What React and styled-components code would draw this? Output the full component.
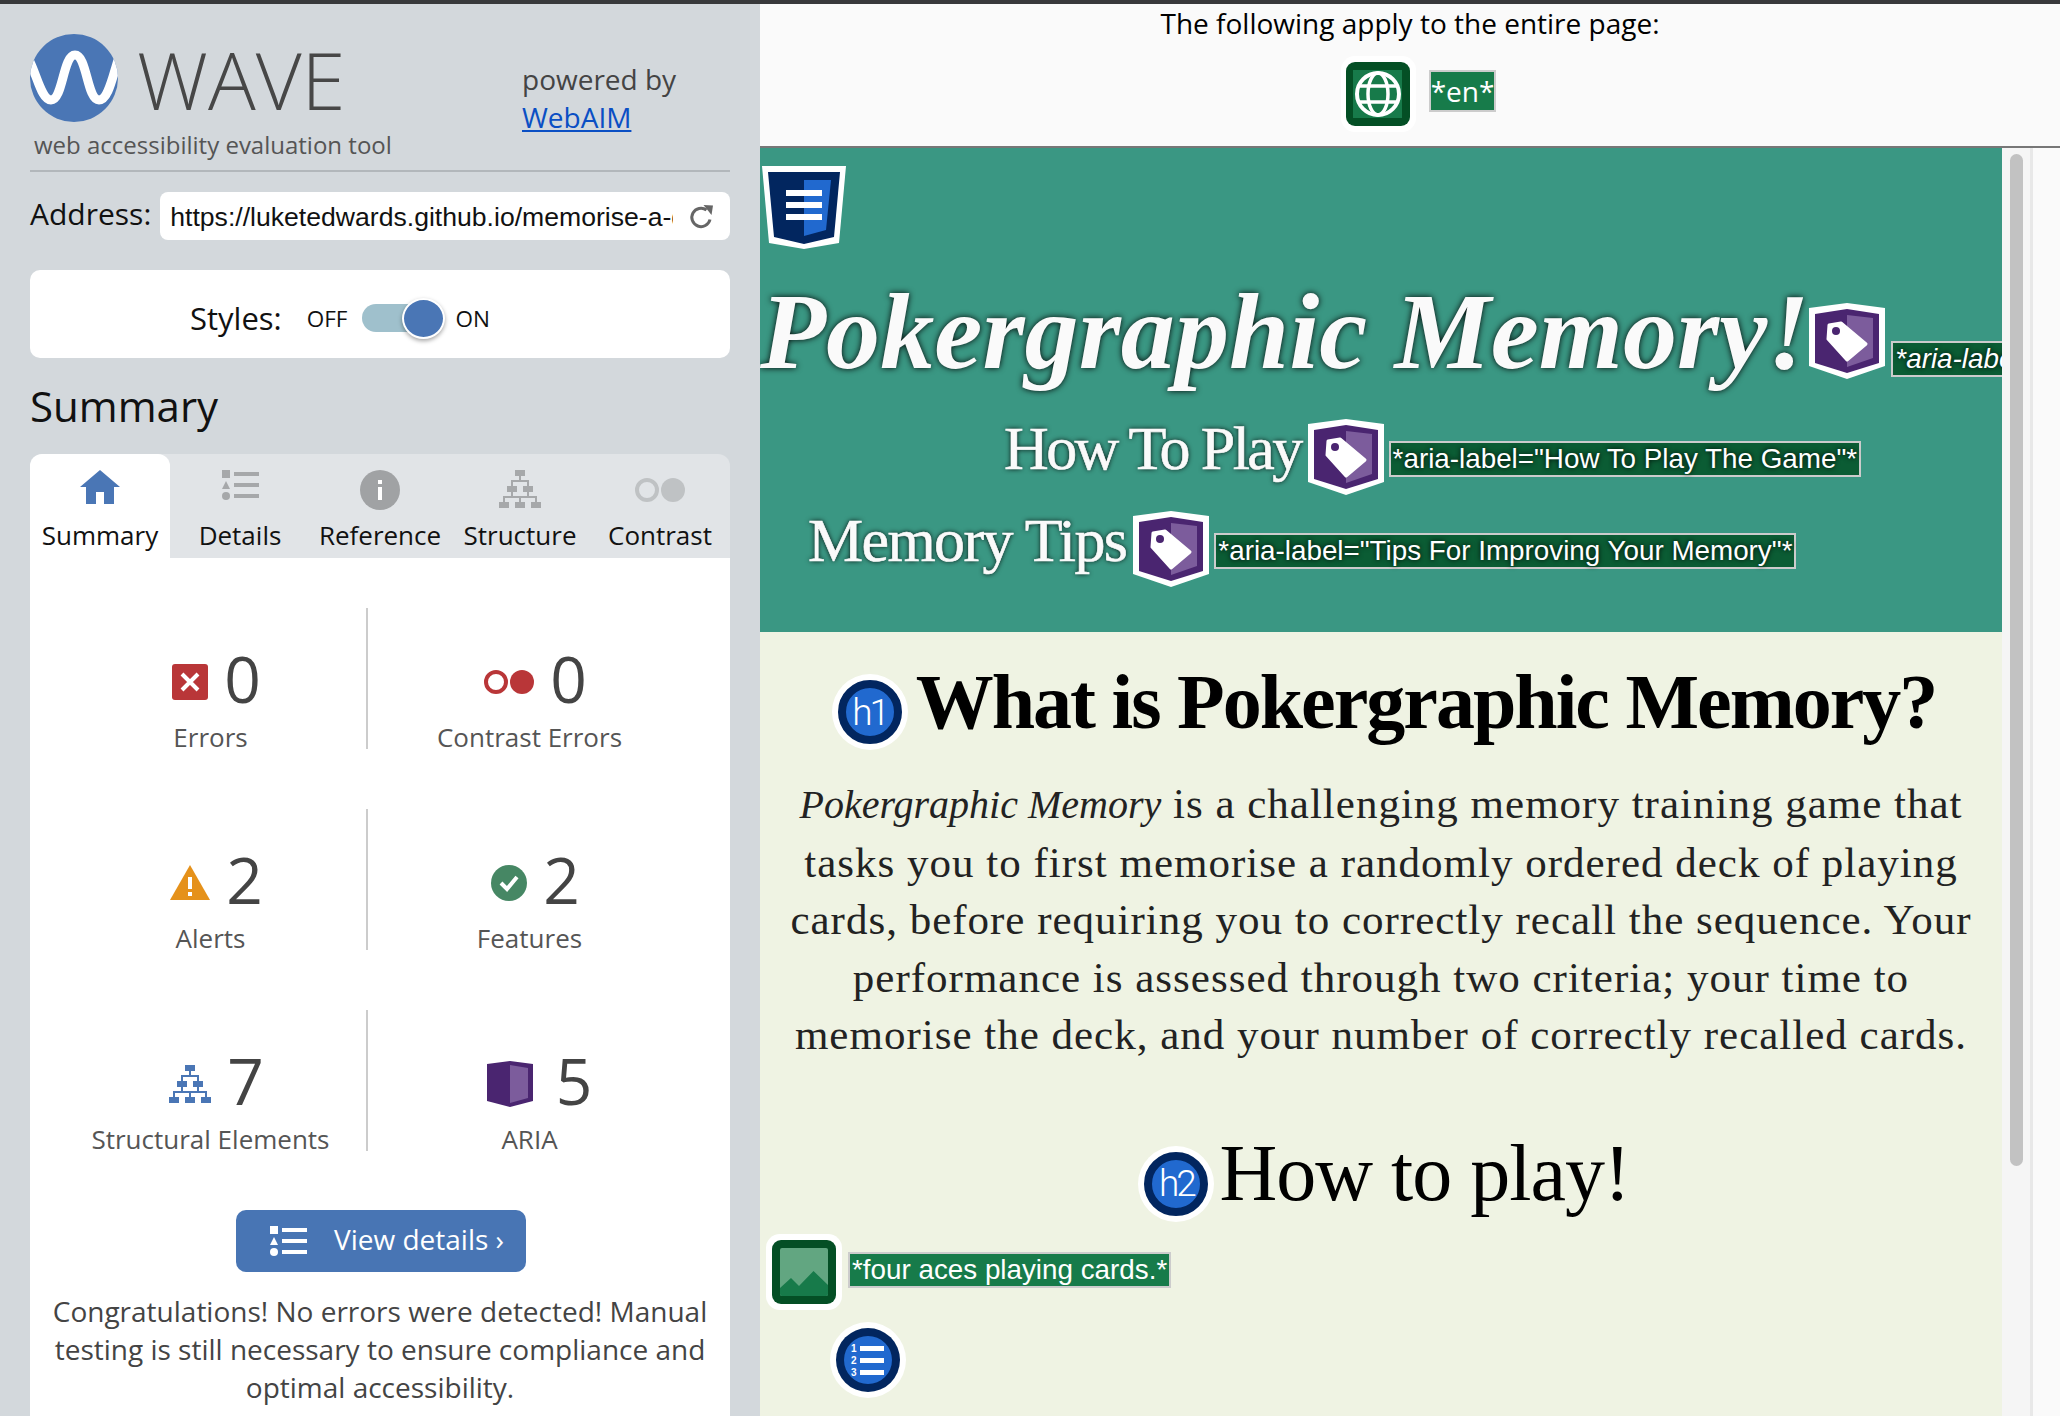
import React from "react";
import styled, { createGlobalStyle } from "styled-components";

const GlobalStyle = createGlobalStyle`
  html, body {
    margin: 0;
    padding: 0;
    height: 100%;
    overflow: hidden;
    font-family: "Open Sans", "Liberation Sans", sans-serif;
  }
  * { box-sizing: border-box; }
`;

const Page = styled.div`
  width: 2060px;
  height: 1416px;
  overflow: hidden;
  display: flex;
  border-top: 4px solid #38393b;
`;

/* ---------- sidebar ---------- */
const Sidebar = styled.aside`
  width: 760px;
  flex: none;
  padding: 30px 30px 0;
  background: #d3d8dc;
`;

const Brand = styled.header`
  display: flex;
`;

const BrandLeft = styled.div`
  width: 492px;
`;

const LogoRow = styled.div`
  display: flex;
  align-items: center;
  height: 88px;
  gap: 19px;
`;

const WaveName = styled.div`
  padding-top: 2px;
  font-size: 79.5px;
  line-height: 88px;
  font-weight: 300;
  color: #474747;
`;

const Tagline = styled.div`
  margin: 7px 0 0 4px;
  font-size: 24px;
  line-height: 32px;
  color: #555;
`;

const Powered = styled.div`
  margin-top: 26px;
  font-size: 28px;
  line-height: 38px;
  color: #444;

  a {
    color: #0a4fc4;
    text-decoration: underline;
  }
`;

const Divider = styled.hr`
  margin: 9px 0 0;
  border: none;
  height: 2px;
  background: #b2b7bb;
`;

const AddressRow = styled.div`
  display: flex;
  align-items: center;
  margin-top: 20px;
  gap: 9px;
`;

const AddressLabel = styled.label`
  font-size: 30px;
  line-height: 38px;
  padding-bottom: 4px;
  color: #111;
`;

const AddressBox = styled.div`
  flex: 1;
  height: 48px;
  display: flex;
  align-items: center;
  gap: 16px;
  padding: 2px 14px 0 10px;
  background: #fff;
  border-radius: 8px;
`;

const AddressInput = styled.input`
  flex: none;
  width: 503px;
  padding: 0;
  border: none;
  outline: none;
  background: none;
  font-family: "Liberation Sans", Arial, sans-serif;
  font-size: 26.6px;
  color: #111;
`;

const StylesCard = styled.div`
  display: flex;
  align-items: center;
  height: 88px;
  margin-top: 30px;
  padding: 8px 0 0 160px;
  background: #fff;
  border-radius: 10px;
`;

const StylesLabel = styled.span`
  font-size: 31px;
  color: #111;
  margin-right: 25px;
`;

const SwitchText = styled.span`
  font-size: 22.5px;
  color: #111;
`;

const Switch = styled.div`
  position: relative;
  width: 70px;
  height: 28px;
  margin: 0 23px 0 15px;
  border-radius: 14px;
  background: #9fc0cc;
`;

const Knob = styled.div`
  position: absolute;
  left: 40px;
  top: -6px;
  width: 43px;
  height: 41px;
  border-radius: 50%;
  border: 2px solid #fff;
  background: #4a76b5;
  box-shadow: 0 2px 4px rgba(0, 0, 0, 0.35);
`;

const SummaryTitle = styled.h2`
  margin: 20px 0 20px;
  font-size: 42px;
  line-height: 56px;
  font-weight: 400;
  color: #111;
`;

const Tabs = styled.nav`
  display: flex;
  height: 104px;
  background: #e1e4e7;
  border-radius: 12px 12px 0 0;
`;

const Tab = styled.div`
  width: 140px;
  display: flex;
  flex-direction: column;
  align-items: center;
  padding-top: 16px;
  border-radius: 12px 12px 0 0;
  background: ${(p) => (p.$active ? "#fff" : "transparent")};
`;

const TabIcon = styled.div`
  height: 40px;
  display: flex;
  align-items: ${(p) => (p.$middle ? "center" : "flex-start")};
`;

const TabLabel = styled.div`
  margin-top: 7px;
  font-size: 26px;
  line-height: 36px;
  color: #111;
`;

const Panel = styled.section`
  background: #fff;
  height: 860px;
  padding-top: 50px;
`;

const StatGrid = styled.div`
  display: grid;
  grid-template-columns: 313px 323px;
  grid-auto-rows: 141px;
  row-gap: 60px;
  padding-left: 25px;
`;

const Stat = styled.div`
  display: flex;
  flex-direction: column;
  align-items: center;
  padding-top: 31px;
  border-right: ${(p) => (p.$first ? "2px solid #ccc" : "none")};
`;

const StatTop = styled.div`
  display: flex;
  align-items: center;
  gap: 16px;
  margin-left: 12px;

  svg {
    margin-top: 5px;
  }
`;

const StatNumber = styled.span`
  font-size: 64px;
  line-height: 80px;
  font-weight: 400;
  color: #444;
`;

const StatLabel = styled.div`
  font-size: 26px;
  line-height: 36px;
  color: #555;
`;

const DetailsButton = styled.button`
  display: flex;
  align-items: center;
  gap: 27px;
  width: 290px;
  height: 62px;
  margin: 59px 0 0 206px;
  padding: 0 0 4px 34px;
  border: none;
  border-radius: 10px;
  background: #4875b4;
  color: #fff;
  font-family: inherit;
  font-size: 28px;

  svg {
    margin-top: 4px;
  }
`;

const Congrats = styled.p`
  margin: 20px 0 0;
  padding: 0 16px;
  text-align: center;
  font-size: 28px;
  line-height: 38px;
  color: #444;
`;

/* ---------- page view ---------- */
const Viewer = styled.div`
  flex: 1;
  display: flex;
  flex-direction: column;
  min-width: 0;
  background: #fafafa;
`;

const PageNotes = styled.div`
  height: 144px;
  flex: none;
  text-align: center;
  border-bottom: 2px solid #777;
`;

const NotesTitle = styled.div`
  font-size: 28px;
  line-height: 38px;
  color: #000;
`;

const NotesRow = styled.div`
  display: flex;
  justify-content: center;
  align-items: center;
  gap: 13px;
  margin-top: 14px;
  padding-left: 17px;
`;

const ViewerBody = styled.div`
  flex: 1;
  display: flex;
  min-height: 0;
`;

const Site = styled.main`
  width: 1242px;
  flex: none;
  overflow: hidden;
  background: #eff3e3;
`;

const Banner = styled.div`
  height: 484px;
  padding-top: 18px;
  background: #3a9783;
  color: #fafafa;
`;

const BannerShield = styled.svg`
  display: block;
  margin-left: 2px;
`;

const BannerRow = styled.div`
  display: flex;
  align-items: flex-start;
  white-space: nowrap;
  gap: ${(p) => p.$gap}px;
  margin-top: ${(p) => p.$top}px;
  margin-left: ${(p) => p.$indent}px;
`;

const SiteTitle = styled.h1`
  margin: 0;
  font-family: "Liberation Serif", "Times New Roman", serif;
  font-style: italic;
  font-size: 108.25px;
  line-height: 104px;
  font-weight: 700;
  text-shadow: 0 0 6px #000;
`;

const SiteLink = styled.div`
  font-family: "Liberation Serif", "Times New Roman", serif;
  font-size: 62px;
  line-height: 80px;
  letter-spacing: ${(p) => p.$tight}px;
  -webkit-text-stroke: 0.6px #fafafa;
  text-shadow: 0 0 5px #000;
`;

const Marker = styled.svg`
  flex: none;
  margin-top: ${(p) => p.$top || 0}px;
`;

const Note = styled.span`
  flex: none;
  height: ${(p) => (p.$large ? 42 : 36)}px;
  margin-top: ${(p) => p.$top || 0}px;
  margin-left: ${(p) => p.$left || 0}px;
  margin-bottom: ${(p) => (p.$large ? 6 : 0)}px;
  padding: 0 ${(p) => (p.$large ? 0 : 2)}px;
  border: 2px solid #ccc;
  background: ${(p) => (p.$dark ? "#0b5c34" : "#177b4a")};
  color: #fff;
  white-space: nowrap;
  font-family: ${(p) => (p.$large ? '"Open Sans", sans-serif' : '"Liberation Sans", Arial, sans-serif')};
  font-size: ${(p) => (p.$large ? 28 : 27.8)}px;
  line-height: ${(p) => (p.$large ? 38 : 32)}px;
  font-style: ${(p) => (p.$italic ? "italic" : "normal")};
  text-shadow: ${(p) => (p.$dark ? "0 0 5px #000" : "none")};
`;

const HeadingRow = styled.div`
  display: flex;
  justify-content: center;
  align-items: flex-start;
  gap: ${(p) => p.$gap}px;
  margin-top: ${(p) => p.$top}px;
  padding-left: 6px;
`;

const HeadingBadge = styled.div`
  flex: none;
  width: 64px;
  height: 64px;
  margin: ${(p) => p.$top + 6}px 6px 6px;
  display: flex;
  align-items: center;
  justify-content: center;
  border: 8px solid #02265f;
  border-radius: 50%;
  background: #2169cf;
  box-shadow: 0 0 0 6px #fff;
  color: #fff;
  font-family: Roboto, "Liberation Sans", sans-serif;
  font-weight: 300;
  font-size: 37px;
  letter-spacing: -3px;
`;

const MainHeading = styled.h2`
  margin: 0;
  font-family: "Liberation Serif", "Times New Roman", serif;
  font-size: 78px;
  line-height: 92px;
  letter-spacing: -2px;
  font-weight: 700;
  color: #000;
`;

const SubHeading = styled.h2`
  margin: 0;
  font-family: "Liberation Serif", "Times New Roman", serif;
  font-size: 80px;
  line-height: 78px;
  letter-spacing: -1px;
  font-weight: 400;
  color: #000;
`;

const Intro = styled.p`
  margin: 25px 0 0;
  text-align: center;
  font-family: "Liberation Serif", "Times New Roman", serif;
  font-size: 43px;
  line-height: 57.5px;
  letter-spacing: 1px;
  color: #222;
  white-space: nowrap;

  em {
    font-size: 40px;
    letter-spacing: 0;
  }
`;

const ImageRow = styled.div`
  display: flex;
  align-items: flex-start;
  gap: 6px;
  margin-top: 12px;
  padding-left: 6px;
`;

const ListMarker = styled.svg`
  display: block;
  margin: 12px 0 0 70px;
`;

const ScrollTrack = styled.div`
  width: 31px;
  flex: none;
  padding: 6px 7px 0 8px;
  background: #f5f5f5;
  border-right: 3px solid #e8e8e8;
`;

const ScrollThumb = styled.div`
  height: 1012px;
  border-radius: 8px;
  background: #c2c2c2;
`;

/* ---------- drawings ---------- */
const Logo = () => (
  <svg width="88" height="88" viewBox="0 0 88 88">
    <defs>
      <clipPath id="logo-clip">
        <circle cx="44" cy="44" r="44" />
      </clipPath>
    </defs>
    <circle cx="44" cy="44" r="44" fill="#4a76b5" />
    <path
      d="M0 28C8 45 12 66 21 66C33 66 33 21 45 21C57 21 57 66 69 66C78 66 82 45 88 26"
      fill="none"
      stroke="#fff"
      strokeWidth="9"
      clipPath="url(#logo-clip)"
    />
  </svg>
);

const Refresh = () => (
  <svg width="26" height="26" viewBox="0 0 26 26">
    <path d="M21 15.5A9.2 9.2 0 1 1 17.5 6" fill="none" stroke="#666" strokeWidth="3" />
    <path d="M14.5 1L24 1.5L22.5 11Z" fill="#666" />
  </svg>
);

const HomeIcon = () => (
  <svg width="40" height="34" viewBox="0 0 40 34">
    <path d="M20 0L40 17H34V34H24V22H16V34H6V17H0Z" fill="#4a76b5" />
  </svg>
);

const DetailsIcon = ({ color }) => (
  <svg width="37" height="30" viewBox="0 0 37 30" fill={color}>
    <rect x="0" y="0" width="8" height="8" />
    <rect x="12" y="2" width="25" height="4" />
    <path d="M4 11L8 19H0Z" />
    <rect x="12" y="13" width="25" height="4" />
    <circle cx="4" cy="26" r="4" />
    <rect x="12" y="24" width="25" height="4" />
  </svg>
);

const InfoIcon = () => (
  <svg width="40" height="40" viewBox="0 0 40 40">
    <circle cx="20" cy="20" r="20" fill="#a0a2a4" />
    <rect x="18" y="10" width="4" height="4" fill="#fff" />
    <rect x="18" y="17" width="4" height="13" fill="#fff" />
  </svg>
);

const StructureIcon = ({ color }) => (
  <svg width="42" height="38" viewBox="0 0 42 38" fill={color}>
    <path
      d="M21 6V11M13 16V11H29V16M13 22V27M29 22V27M5 32V27H37V32M21 27V32"
      fill="none"
      stroke={color}
      strokeWidth="2"
    />
    <rect x="16" y="0" width="10" height="6" />
    <rect x="8" y="16" width="10" height="6" />
    <rect x="24" y="16" width="10" height="6" />
    <rect x="0" y="32" width="10" height="6" />
    <rect x="16" y="32" width="10" height="6" />
    <rect x="32" y="32" width="10" height="6" />
  </svg>
);

const ContrastIcon = ({ color }) => (
  <svg width="50" height="24" viewBox="0 0 50 24">
    <circle cx="12" cy="12" r="10" fill="none" stroke={color} strokeWidth="4" />
    <circle cx="38" cy="12" r="12" fill={color} />
  </svg>
);

const ErrorIcon = () => (
  <svg width="36" height="36" viewBox="0 0 36 36">
    <rect width="36" height="36" rx="3" fill="#b93638" />
    <path d="M10 10L26 26M26 10L10 26" stroke="#fff" strokeWidth="4" />
  </svg>
);

const AlertIcon = () => (
  <svg width="40" height="35" viewBox="0 0 40 35">
    <path d="M20 0L40 35H0Z" fill="#e5911a" />
    <rect x="18" y="12" width="4" height="12" fill="#fff" />
    <rect x="18" y="27" width="4" height="4" fill="#fff" />
  </svg>
);

const FeatureIcon = () => (
  <svg width="36" height="36" viewBox="0 0 36 36">
    <circle cx="18" cy="18" r="18" fill="#468764" />
    <path d="M10 18L16 24L26 12" fill="none" stroke="#fff" strokeWidth="4" />
  </svg>
);

const AriaIcon = () => (
  <svg width="61" height="46" viewBox="-8 0 61 46">
    <path d="M23 0L46 3V40L23 46L0 40V3Z" fill="#4a2570" />
    <path d="M23 4L41 7V37L23 42Z" fill="#7c5c9c" />
  </svg>
);

const GlobeMarker = () => (
  <Marker width="75" height="76" viewBox="0 0 75 76">
    <rect width="75" height="76" rx="14" fill="#fff" />
    <rect x="5" y="6" width="64" height="64" rx="9" fill="#044f25" />
    <rect x="12" y="14" width="49" height="48" fill="#177a4a" />
    <g fill="none" stroke="#fff">
      <circle cx="37" cy="38" r="21" strokeWidth="4" />
      <ellipse cx="37" cy="38" rx="10" ry="21" strokeWidth="3.5" />
      <path d="M17 30H57M17 46H57" strokeWidth="3.5" />
    </g>
  </Marker>
);

const TagMarker = ({ top }) => (
  <Marker $top={top} width="76" height="76" viewBox="0 0 76 76">
    <path d="M38 0L76 5V63L38 76L0 63V5Z" fill="#fff" />
    <path d="M38 6L70 11V60L38 70L6 60V11Z" fill="#4a2570" />
    <path d="M38 12L64 15V55L38 64Z" fill="#7c5c9c" />
    <path
      d="M20 22L32 20L57 41L38 57L19 36Z"
      fill="#fff"
      stroke="#fff"
      strokeWidth="3"
      strokeLinejoin="round"
    />
    <circle cx="27" cy="28" r="4" fill="#4a2570" />
  </Marker>
);

const ImageMarker = () => (
  <Marker width="76" height="76" viewBox="0 0 76 76">
    <rect width="76" height="76" rx="14" fill="#fff" />
    <rect x="6" y="6" width="64" height="64" rx="9" fill="#044f25" />
    <rect x="14" y="14" width="48" height="48" rx="2" fill="#62a681" />
    <path d="M14 54L25 44L33 52L47.5 37L62 51V60a2 2 0 0 1-2 2H16a2 2 0 0 1-2-2Z" fill="#177a4a" />
  </Marker>
);

const stats = [
  { icon: <ErrorIcon />, count: 0, label: "Errors" },
  { icon: <ContrastIcon color="#b93638" />, count: 0, label: "Contrast Errors" },
  { icon: <AlertIcon />, count: 2, label: "Alerts" },
  { icon: <FeatureIcon />, count: 2, label: "Features" },
  { icon: <StructureIcon color="#4a76b5" />, count: 7, label: "Structural Elements" },
  { icon: <AriaIcon />, count: 5, label: "ARIA" },
];

export default function App() {
  return (
    <>
      <GlobalStyle />
      <Page>
        <Sidebar>
          <Brand>
            <BrandLeft>
              <LogoRow>
                <Logo />
                <WaveName>WAVE</WaveName>
              </LogoRow>
              <Tagline>web accessibility evaluation tool</Tagline>
            </BrandLeft>
            <Powered>
              powered by
              <br />
              <a href="#webaim">WebAIM</a>
            </Powered>
          </Brand>
          <Divider />
          <AddressRow>
            <AddressLabel>Address:</AddressLabel>
            <AddressBox>
              <AddressInput readOnly value="https://luketedwards.github.io/memorise-a-deck/" />
              <Refresh />
            </AddressBox>
          </AddressRow>
          <StylesCard>
            <StylesLabel>Styles:</StylesLabel>
            <SwitchText>OFF</SwitchText>
            <Switch>
              <Knob />
            </Switch>
            <SwitchText>ON</SwitchText>
          </StylesCard>
          <SummaryTitle>Summary</SummaryTitle>
          <Tabs>
            <Tab $active>
              <TabIcon>
                <HomeIcon />
              </TabIcon>
              <TabLabel>Summary</TabLabel>
            </Tab>
            <Tab>
              <TabIcon>
                <DetailsIcon color="#a6a8aa" />
              </TabIcon>
              <TabLabel>Details</TabLabel>
            </Tab>
            <Tab>
              <TabIcon>
                <InfoIcon />
              </TabIcon>
              <TabLabel>Reference</TabLabel>
            </Tab>
            <Tab>
              <TabIcon>
                <StructureIcon color="#a6a8aa" />
              </TabIcon>
              <TabLabel>Structure</TabLabel>
            </Tab>
            <Tab>
              <TabIcon $middle>
                <ContrastIcon color="#bfc2c4" />
              </TabIcon>
              <TabLabel>Contrast</TabLabel>
            </Tab>
          </Tabs>
          <Panel>
            <StatGrid>
              {stats.map((stat, i) => (
                <Stat key={stat.label} $first={i % 2 === 0}>
                  <StatTop>
                    {stat.icon}
                    <StatNumber>{stat.count}</StatNumber>
                  </StatTop>
                  <StatLabel>{stat.label}</StatLabel>
                </Stat>
              ))}
            </StatGrid>
            <DetailsButton>
              <DetailsIcon color="#fff" />
              View details ›
            </DetailsButton>
            <Congrats>
              Congratulations! No errors were detected! Manual testing is still necessary to ensure
              compliance and optimal accessibility.
            </Congrats>
          </Panel>
        </Sidebar>

        <Viewer>
          <PageNotes>
            <NotesTitle>The following apply to the entire page:</NotesTitle>
            <NotesRow>
              <GlobeMarker />
              <Note $large>*en*</Note>
            </NotesRow>
          </PageNotes>
          <ViewerBody>
            <Site>
              <Banner>
                <BannerShield width="84" height="84" viewBox="0 0 84 84">
                  <path d="M0 0H84L77 77L42 83L7 77Z" fill="#fff" />
                  <path d="M6 6H78L72 71L42 78L12 71Z" fill="#02265f" />
                  <path d="M42 14H69L64 64L42 70Z" fill="#2169cf" />
                  <path d="M24 24H60V30H24ZM24 36H60V42H24ZM24 48H60V54H24Z" fill="#fff" />
                </BannerShield>
                <BannerRow $gap={0} $top={30} $indent={0}>
                  <SiteTitle>Pokergraphic Memory!</SiteTitle>
                  <TagMarker top={23} />
                  <Note $dark $italic $top={61} $left={6}>*aria-label="Pokergraphic Memory"*</Note>
                </BannerRow>
                <BannerRow $gap={7} $top={24} $indent={244}>
                  <SiteLink $tight={-2.6}>How To Play</SiteLink>
                  <TagMarker top={11} />
                  <Note $dark $top={33} $left={-2}>*aria-label="How To Play The Game"*</Note>
                </BannerRow>
                <BannerRow $gap={7} $top={5} $indent={48}>
                  <SiteLink $tight={-1.6}>Memory Tips</SiteLink>
                  <TagMarker top={11} />
                  <Note $dark $top={33} $left={-2}>*aria-label="Tips For Improving Your Memory"*</Note>
                </BannerRow>
              </Banner>

              <HeadingRow $gap={8} $top={24}>
                <HeadingBadge $top={18}>h1</HeadingBadge>
                <MainHeading>What is Pokergraphic Memory?</MainHeading>
              </HeadingRow>
              <Intro>
                <em>Pokergraphic Memory</em> is a challenging memory training game that
                <br />
                tasks you to first memorise a randomly ordered deck of playing
                <br />
                cards, before requiring you to correctly recall the sequence. Your
                <br />
                performance is assessed through two criteria; your time to
                <br />
                memorise the deck, and your number of correctly recalled cards.
              </Intro>
              <HeadingRow $gap={5} $top={70}>
                <HeadingBadge $top={12}>h2</HeadingBadge>
                <SubHeading>How to play!</SubHeading>
              </HeadingRow>
              <ImageRow>
                <ImageMarker />
                <Note $top={18}>*four aces playing cards.*</Note>
              </ImageRow>
              <ListMarker width="76" height="76" viewBox="0 0 76 76">
                <circle cx="38" cy="38" r="38" fill="#fff" />
                <circle cx="38" cy="38" r="32" fill="#02265f" />
                <circle cx="38" cy="38" r="24" fill="#2169cf" />
                <path d="M30 24H54V29H30ZM30 36H54V41H30ZM30 48H54V53H30Z" fill="#fff" />
                <g fill="#fff" fontFamily="Liberation Sans" fontSize="10" fontWeight="700">
                  <text x="21" y="30">1</text>
                  <text x="21" y="42">2</text>
                  <text x="21" y="54">3</text>
                </g>
              </ListMarker>
            </Site>
            <ScrollTrack>
              <ScrollThumb />
            </ScrollTrack>
          </ViewerBody>
        </Viewer>
      </Page>
    </>
  );
}
